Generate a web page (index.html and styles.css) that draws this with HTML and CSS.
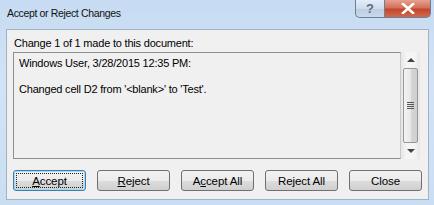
FILE: index.html
```html
<!doctype html>
<html lang="en">
<head>
	<meta charset="UTF-8" />
	<title>Accept or Reject Changes</title>
<link rel="stylesheet" href="styles.css">
</head>
<body>
	<section id="dialog">
		<header class="titlebar">
			<h1>Accept or Reject Changes</h1>
			<div class="caption">
				<a href="javascript:;" class="help">?</a>
				<a href="javascript:;" class="close">
					<svg width="14" height="11" viewBox="0 0 14 11"><path d="M2 1 L12 10 M12 1 L2 10" stroke="#fff" stroke-width="2.6" stroke-linecap="square"/></svg>
				</a>
			</div>
		</header>
		<div class="client">
			<p class="info">Change 1 of 1 made to this document:</p>
			<div class="memo">
				<div class="memo-text">
					<p>Windows User, 3/28/2015 12:35 PM:</p>
					<p>Changed cell D2 from '&lt;blank&gt;' to 'Test'.</p>
				</div>
				<div class="scroll">
					<span class="arrow up"></span>
					<div class="thumb"><i></i><i></i><i></i><i></i></div>
					<span class="arrow down"></span>
				</div>
			</div>
			<div class="buttons">
				<button class="default"><span><u>A</u>ccept</span></button>
				<button><span><u>R</u>eject</span></button>
				<button><span>A<u>c</u>cept All</span></button>
				<button><span>Re<u>j</u>ect All</span></button>
				<button><span>Close</span></button>
			</div>
		</div>
	</section>
</body>
</html>
```

FILE: styles.css
```css
*{
	margin: 0;
	padding: 0;
	box-sizing: border-box;
}
body{
	background: #c5d9ef;
}
#dialog{
	width: 434px;
	height: 205px;
	display: flex;
	flex-direction: column;
	background: linear-gradient(to bottom, #c6dbf2 0%, #d3e3f5 40%, #cadef3 100%);
	font-family: "Liberation Sans", Arial, sans-serif;
	color: #000;
}
.titlebar{
	height: 29px;
	display: flex;
	justify-content: space-between;
	align-items: flex-start;
}
.titlebar h1{
	font-size: 10.5px;
	letter-spacing: -0.35px;
	font-weight: normal;
	line-height: 27px;
	padding-left: 7px;
	color: #111;
}
.caption{
	display: flex;
	margin-right: 3px;
}
.caption a{
	display: flex;
	align-items: center;
	justify-content: center;
	height: 18px;
	border: 1px solid #6e7f94;
	border-top: none;
	text-decoration: none;
}
.help{
	width: 29px;
	border-radius: 0 0 0 5px;
	border-right: none !important;
	background: linear-gradient(to bottom, #e3ecf7 0%, #cfdcec 50%, #bccde1 51%, #c9d8eb 100%);
	color: #5d6b7e;
	font-size: 13px;
	font-weight: bold;
}
.close{
	width: 47px;
	border-radius: 0 0 5px 0;
	background: linear-gradient(to bottom, #e6a190 0%, #d4705a 45%, #c4462c 55%, #d06a4e 100%);
}
.client{
	flex: 1;
	margin: 0 5px 5px 6px;
	background: #f0f0f0;
	border: 1px solid #9fb2c8;
	padding: 6px 5px 0 6px;
	display: flex;
	flex-direction: column;
}
.info{
	font-size: 11px;
	letter-spacing: -0.2px;
	line-height: 15px;
	padding-left: 1px;
}
.memo{
	margin-top: 1px;
	height: 107px;
	display: flex;
}
.memo-text{
	flex: 1;
	border: 1px solid #8e8f8f;
	border-right-color: #c9c9c9;
	padding: 3px 5px;
	font-size: 11px;
	letter-spacing: -0.2px;
	line-height: 15px;
}
.memo-text p{
	margin-bottom: 11px;
}
.scroll{
	width: 19px;
	margin-right: 3px;
	display: flex;
	flex-direction: column;
	align-items: center;
	background: linear-gradient(to right, #e6e6e6, #f5f5f5 30%, #f5f5f5 70%, #e6e6e6);
}
.arrow{
	width: 0;
	height: 0;
	border-left: 4px solid transparent;
	border-right: 4px solid transparent;
	margin: 6px 0;
}
.arrow.up{
	border-bottom: 4px solid #444;
}
.arrow.down{
	border-top: 4px solid #444;
}
.thumb{
	flex: 1;
	width: 15px;
	border: 1px solid #979797;
	border-radius: 2px;
	background: linear-gradient(to right, #f3f3f3 0%, #e8e8e8 50%, #d6d6d6 51%, #cfcfcf 100%);
	display: flex;
	flex-direction: column;
	align-items: center;
	justify-content: center;
	gap: 1px;
}
.thumb i{
	display: block;
	width: 7px;
	height: 1px;
	background: #555;
}
.buttons{
	display: flex;
	gap: 11px;
	margin-top: 11px;
	padding-left: 0;
}
button{
	width: 73px;
	height: 21px;
	font-family: "Liberation Sans", Arial, sans-serif;
	font-size: 11.5px;
	letter-spacing: -0.1px;
	color: #000;
	border: 1px solid #707070;
	border-radius: 3px;
	background: linear-gradient(to bottom, #f2f2f2 0%, #ebebeb 50%, #dddddd 51%, #cfcfcf 100%);
	padding: 2px;
}
button span{
	display: block;
	height: 100%;
	line-height: 15px;
	border: 1px solid transparent;
}
button.default{
	border-color: #3c7fb1;
	box-shadow: inset 0 0 0 1px #a6d8f5;
}
button.default span{
	border: 1px dotted #222;
}
```
